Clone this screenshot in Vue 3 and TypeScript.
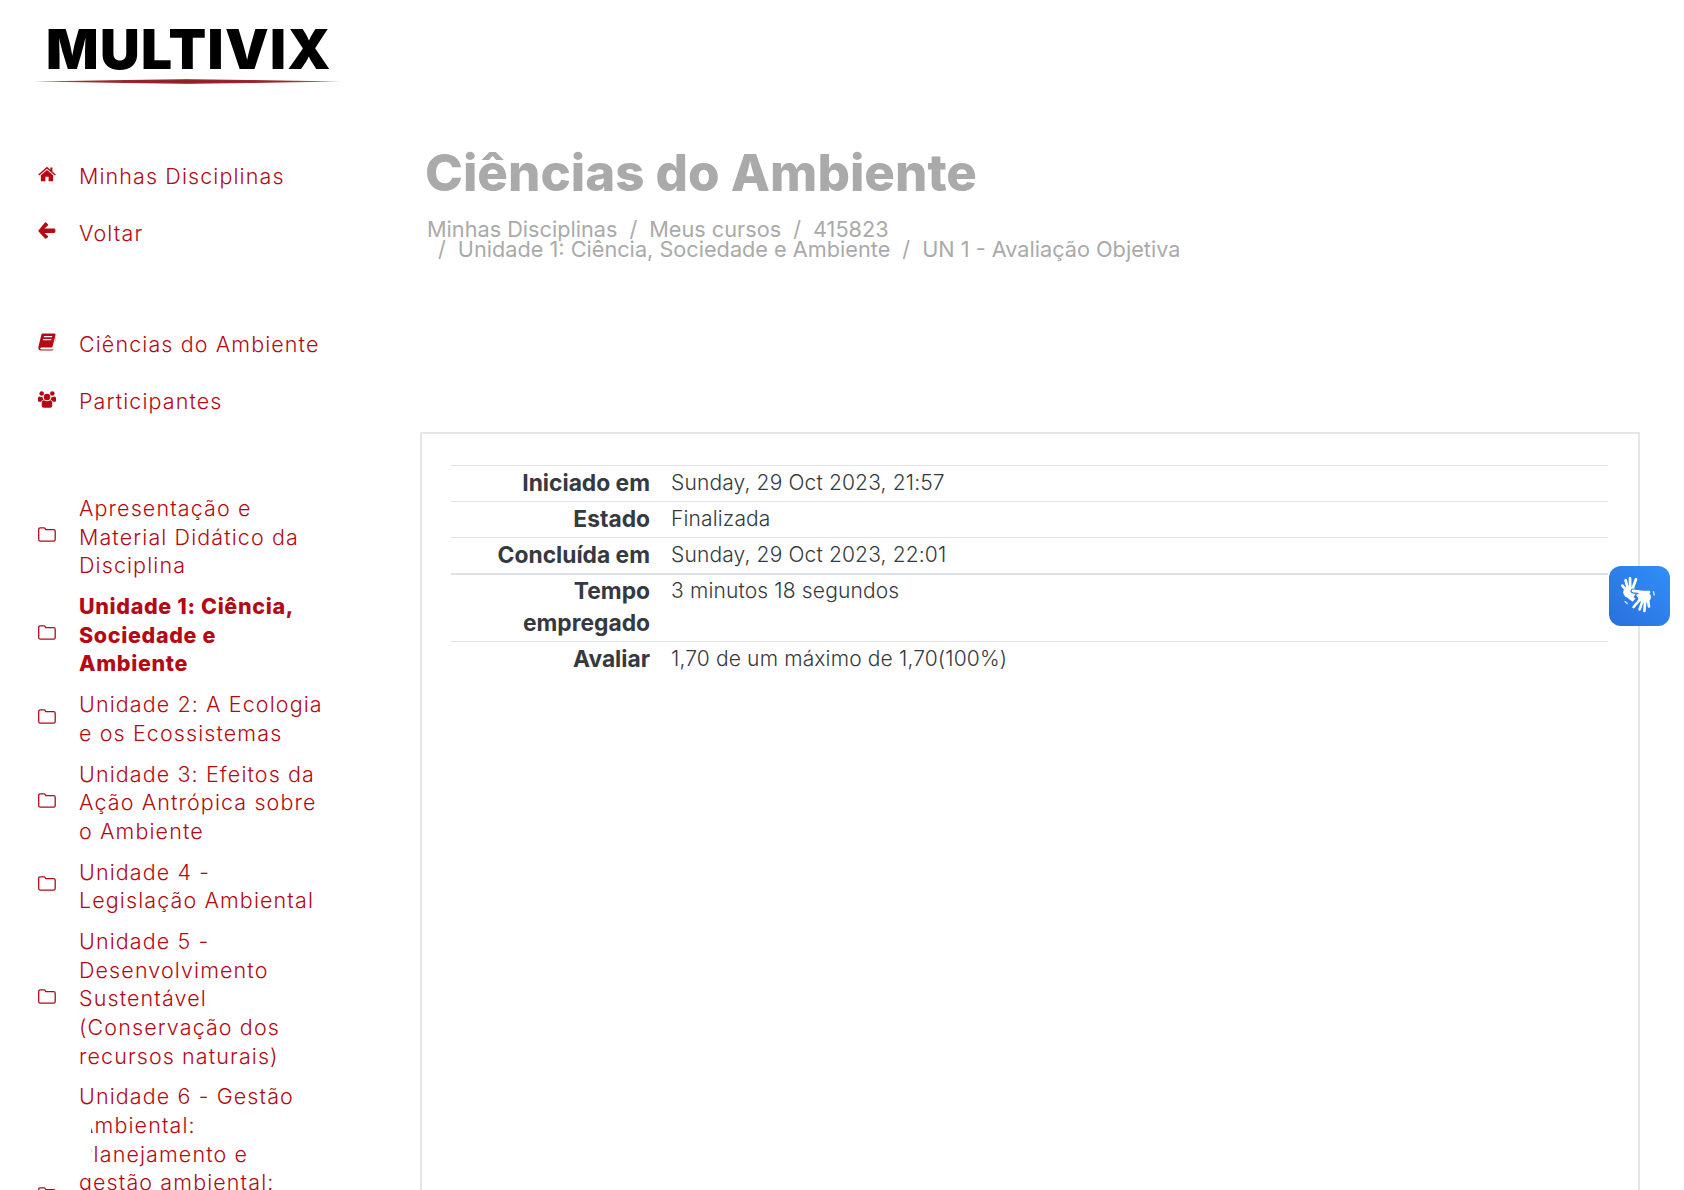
<script setup lang="ts">
const top1 = [
  { t: 'Minhas Disciplinas', i: 'home' },
  { t: 'Voltar', i: 'back' },
]
const top2 = [
  { t: 'Ciências do Ambiente', i: 'book' },
  { t: 'Participantes', i: 'users' },
]
const units = [
  { t: 'Apresentação e\nMaterial Didático da\nDisciplina', b: false, tall: false },
  { t: 'Unidade 1: Ciência,\nSociedade e\nAmbiente', b: true, tall: false },
  { t: 'Unidade 2: A Ecologia\ne os Ecossistemas', b: false, tall: false },
  { t: 'Unidade 3: Efeitos da\nAção Antrópica sobre\no Ambiente', b: false, tall: false },
  { t: 'Unidade 4 -\nLegislação Ambiental', b: false, tall: false },
  { t: 'Unidade 5 -\nDesenvolvimento\nSustentável\n(Conservação dos\nrecursos naturais)', b: false, tall: false },
  { t: 'Unidade 6 - Gestão\nAmbiental:\nPlanejamento e\ngestão ambiental:', b: false, tall: true },
]
const rows = [
  { k: 'Iniciado em', v: 'Sunday, 29 Oct 2023, 21:57' },
  { k: 'Estado', v: 'Finalizada' },
  { k: 'Concluída em', v: 'Sunday, 29 Oct 2023, 22:01' },
  { k: 'Tempo\nempregado', v: '3 minutos 18 segundos' },
  { k: 'Avaliar', v: '1,70 de um máximo de 1,70(100%)' },
]
const crumbs1 = ['Minhas Disciplinas', 'Meus cursos', '415823']
const crumbs2 = ['Unidade 1: Ciência, Sociedade e Ambiente', 'UN 1 - Avaliação Objetiva']
</script>

<template>
  <div class="page">
    <aside class="side">
      <div class="logo">
        <span class="logo-text">MULTIVIX</span>
        <span class="logo-line"></span>
      </div>
      <nav class="group first">
        <a v-for="n in top1" :key="n.t" class="link">
          <span class="ic">
            <svg v-if="n.i === 'home'" width="19" height="16" viewBox="0 0 19 16"><path fill="currentColor" d="M9.5 0.3 L13 3.4 V1.2 H15.2 V5.3 L18.8 8.4 L17.8 9.5 L9.5 2.4 L1.2 9.5 L0.2 8.4 Z M3 9.4 L9.5 3.9 L16 9.4 V15 Q16 15.7 15.3 15.7 H11.2 V11 H7.8 V15.7 H3.7 Q3 15.7 3 15 Z"/></svg>
            <svg v-else width="18" height="17" viewBox="0 0 18 17"><path fill="currentColor" d="M8.2 0.6 L9.9 2.3 Q10.4 2.9 9.9 3.5 L6.6 6.6 H16 Q17.4 6.6 17.4 8 V9.6 Q17.4 10.9 16 10.9 H6.6 L9.9 14.1 Q10.4 14.7 9.9 15.3 L8.2 16.6 Q7.6 17.1 7 16.6 L0.6 9.4 Q0.1 8.8 0.6 8.2 L7 0.6 Q7.6 0.1 8.2 0.6 Z"/></svg>
          </span>
          <span class="txt">{{ n.t }}</span>
        </a>
      </nav>
      <nav class="group second">
        <a v-for="n in top2" :key="n.t" class="link">
          <span class="ic">
            <svg v-if="n.i === 'book'" width="18" height="18" viewBox="0 0 18 18"><path fill="currentColor" fill-rule="evenodd" d="M4.6 0.4 H16.6 Q17.8 0.6 17.5 1.9 L14.6 13.6 Q14.3 14.6 13.2 14.6 H3.2 Q1.9 14.8 2.2 15.7 Q2.5 16.4 3.5 16.4 H14.8 Q15.6 16.4 15.9 15.4 L17.8 4.2 L18 4.8 L15.6 16.5 Q15.2 17.6 14 17.6 H3 Q0.6 17.6 0.3 15.2 Q0.2 14.6 0.5 13.6 L3.4 1.6 Q3.7 0.4 4.6 0.4 Z M6 3.1 L5.7 4.3 H14 L14.3 3.1 Z M5.2 6 L4.9 7.2 H13.2 L13.5 6 Z"/></svg>
            <svg v-else width="23" height="21" viewBox="0 0 21 20"><g fill="currentColor"><circle cx="4.3" cy="3" r="2.7"/><circle cx="16.7" cy="3" r="2.7"/><circle cx="10.5" cy="7.2" r="3.8"/><path d="M0 8.5 Q0 6.6 1.6 6.6 Q3 7.4 5 6.9 Q5.3 9 6.5 10.2 Q4.2 10.9 3.6 12.7 H1 Q0 12.7 0 11.6 Z"/><path d="M21 8.5 Q21 6.6 19.4 6.6 Q18 7.4 16 6.9 Q15.7 9 14.5 10.2 Q16.8 10.9 17.4 12.7 H20 Q21 12.7 21 11.6 Z"/><path d="M7 11 Q10.5 13.2 14 11 Q16.6 11.2 16.6 14.5 V17.2 Q16.6 19.6 14.2 19.6 H6.8 Q4.4 19.6 4.4 17.2 V14.5 Q4.4 11.2 7 11 Z"/></g></svg>
          </span>
          <span class="txt">{{ n.t }}</span>
        </a>
      </nav>
      <nav class="group units">
        <a v-for="u in units" :key="u.t" class="unit" :class="{ bold: u.b, tall: u.tall }">
          <span class="ic">
            <svg width="18" height="15" viewBox="0 0 18 15"><path fill="none" stroke="currentColor" stroke-width="1.3" d="M2.2 0.8 H6 Q6.9 0.8 7.2 1.6 L7.7 2.6 H15.6 Q17.2 2.6 17.2 4.2 V12.4 Q17.2 14.1 15.6 14.1 H2.3 Q0.7 14.1 0.7 12.4 V2.4 Q0.7 0.8 2.2 0.8 Z"/></svg>
          </span>
          <span class="txt">{{ u.t }}</span>
        </a>
      </nav>
      <div class="mask"></div>
    </aside>

    <main class="main">
      <header class="head">
        <h1 class="title">Ciências do Ambiente</h1>
        <div class="crumbs">
          <div class="crumb-row">
            <template v-for="(c, i) in crumbs1" :key="c">
              <span v-if="i" class="sep">/</span><span>{{ c }}</span>
            </template>
          </div>
          <div class="crumb-row indent">
            <template v-for="c in crumbs2" :key="c">
              <span class="sep">/</span><span>{{ c }}</span>
            </template>
          </div>
        </div>
      </header>
      <section class="card">
        <table class="info">
          <tbody>
            <tr v-for="r in rows" :key="r.k">
              <th>{{ r.k }}</th>
              <td>{{ r.v }}</td>
            </tr>
          </tbody>
        </table>
      </section>
    </main>

    <div class="vlibras" aria-label="Acessibilidade">
      <svg width="40" height="40" viewBox="0 0 40 40" stroke-linecap="round" fill="none">
        <g stroke="#fff" stroke-width="2.7">
          <path d="M6 14 L2.4 9.6 M7.6 12 L5.6 4.2 M10.2 12 L10 2.4 M12.6 12.5 L16 3.2"/>
        </g>
        <ellipse cx="9.6" cy="16.2" rx="6.4" ry="5.8" fill="#fff"/>
        <path d="M9.6 21 L14 24" stroke="#fff" stroke-width="4"/>
        <g stroke="#2e80ec" stroke-width="5">
          <path d="M13 15 L22 16.5"/>
          <path d="M19 22 L14 28"/>
        </g>
        <ellipse cx="24.4" cy="21" rx="6.6" ry="5.6" fill="#fff"/>
        <g stroke="#fff" stroke-width="2.7">
          <path d="M13 14.8 L23 16.2 L29 16"/>
          <path d="M20.4 23 L13.6 31 M22.6 25 L19.6 33.4 M25.2 25 L24.4 35 M28 24 L29 30.5"/>
          <path d="M18 19.5 L22 18" stroke-width="3"/>
        </g>
        <g stroke="#dce9fb" stroke-width="1.3">
          <path d="M5 25.6 L7.2 27.6 M33.4 15.6 L34.2 19"/>
        </g>
      </svg>
    </div>
  </div>
</template>

<style>
html, body { margin: 0; height: 1190px; overflow: hidden; background: #fff; }
</style>

<style scoped>
.page {
  display: flex;
  height: 1190px;
  overflow: hidden;
  position: relative;
  font-family: Inter, "Liberation Sans", sans-serif;
  color: #343a40;
}
.side { width: 420px; flex: none; position: relative; }
.logo { height: 96px; padding: 19px 0 0 33px; position: relative; box-sizing: border-box; }
.logo-text {
  display: block;
  font-weight: 900;
  font-size: 55px;
  line-height: 60px;
  color: #000;
  padding-left: 13px;
  letter-spacing: 1.3px;
}
.logo-line {
  display: block;
  position: absolute;
  left: 33px;
  top: 79px;
  width: 308px;
  height: 5px;
  background: radial-gradient(ellipse at center, #8e1c22 0%, #9a2a30 45%, rgba(160, 50, 55, .7) 70%, rgba(255, 255, 255, 0) 100%);
  clip-path: polygon(0 50%, 30% 20%, 50% 0, 70% 20%, 100% 50%, 70% 80%, 50% 100%, 30% 80%);
}
.group { display: flex; flex-direction: column; }
.first { margin-top: 52px; }
.second { margin-top: 55px; }
.units { margin-top: 58.5px; }
.link, .unit {
  display: flex;
  align-items: center;
  color: #b30a14;
  font-size: 21.5px;
  line-height: 28.6px;
  letter-spacing: 1.1px;
  font-weight: 350;
}
.link { padding: 14px 0; }
.link .ic { margin-bottom: 4px; }
.unit { padding: 6.15px 0; }
.unit .ic { margin-bottom: 5px; }
.unit.bold { font-weight: 800; letter-spacing: 0.65px; }
.unit.tall { min-height: 229px; }
.unit.tall .txt { align-self: flex-start; }
.ic { width: 18px; margin-left: 38px; margin-right: 23px; display: flex; justify-content: center; flex: none; }
.txt { width: 260px; white-space: pre-line; }
.mask {
  position: absolute;
  left: 79px;
  top: 1113px;
  width: 12px;
  height: 56px;
  background: #fff;
}
.main { flex: 1; min-width: 0; padding-right: 44px; }
.head { padding: 144px 0 0 5px; height: 431.5px; box-sizing: border-box; }
.title {
  margin: 0;
  font-size: 51px;
  line-height: 58px;
  font-weight: 800;
  color: #aaa;
}
.crumbs { margin-top: 17px; font-size: 21.7px; line-height: 20.4px; color: #aaa; padding-left: 2px; }
.crumb-row { display: flex; }
.indent { padding-left: 11px; }
.sep { padding: 0 12px; }
.crumb-row.indent .sep:first-child { padding-left: 0; }
.card {
  height: 900px;
  border: 2px solid #e4e6e8;
  box-sizing: border-box;
  padding: 31px 30px 31px 29px;
}
.info { width: 100%; border-collapse: collapse; font-size: 21px; line-height: 32px; }
.info tr { border-top: 1px solid #dee2e6; }
.info tr:nth-child(4) { border-top-width: 2px; }
.info th {
  width: 189px;
  text-align: right;
  font-size: 22.8px;
  font-weight: 700;
  white-space: pre-line;
  padding: 1px 10px 2px 10px;
  vertical-align: top;
}
.info tr:nth-child(4) th, .info tr:nth-child(4) td { padding-top: 0; }
.info td { padding: 1px 10px 2px 11px; vertical-align: top; font-weight: 350; letter-spacing: 0.15px; }
.vlibras {
  position: absolute;
  left: 1609px;
  top: 566px;
  width: 61px;
  height: 60px;
  border-radius: 12px;
  background: linear-gradient(45deg, #2a6fdc, #3090f8);
  display: flex;
  align-items: center;
  justify-content: center;
}
</style>
